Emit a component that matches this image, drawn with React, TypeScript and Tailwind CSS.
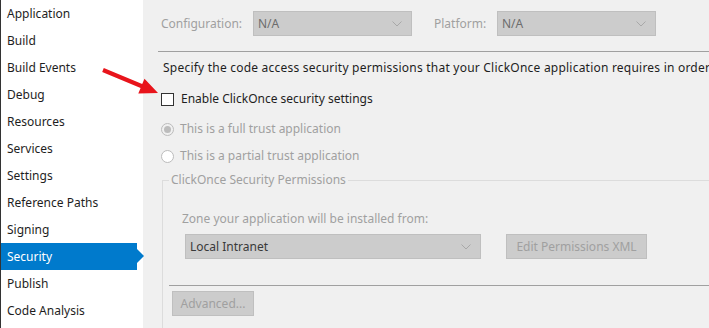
import React from "react";

const items = [
  "Application",
  "Build",
  "Build Events",
  "Debug",
  "Resources",
  "Services",
  "Settings",
  "Reference Paths",
  "Signing",
  "Security",
  "Publish",
  "Code Analysis",
];

function Chevron() {
  return (
    <svg width="10" height="6" viewBox="0 0 10 6" className="shrink-0">
      <polyline points="0.5,0.5 5,5 9.5,0.5" fill="none" stroke="#a8a8a8" strokeWidth="1" />
    </svg>
  );
}

function Select({ value, w, dark }: { value: string; w: string; dark?: boolean }) {
  return (
    <div
      className={`${w} h-[25px] bg-[#cccccc] border border-[#bfbfbf] flex items-center justify-between pl-[4px] pr-[9px] ${
        dark ? "text-[#3a3a3a]" : "text-[#6d6d6d]"
      }`}
    >
      <span>{value}</span>
      <Chevron />
    </div>
  );
}

export default function App() {
  return (
    <div
      className="relative w-[709px] h-[328px] overflow-hidden flex text-[12px] leading-[16px]"
      style={{ fontFamily: '"Noto Sans", "Open Sans", sans-serif' }}
    >
      {/* Sidebar */}
      <div className="w-[143px] h-full bg-white border-l border-[#333333] shrink-0">
        {items.map((it) => {
          const sel = it === "Security";
          return (
            <div
              key={it}
              className={`relative w-[136px] h-[27px] flex items-center pl-[6px] ${
                sel ? "bg-[#007acc] text-white" : "text-[#1e1e1e]"
              }`}
            >
              {it}
              {sel && (
                <div className="absolute right-[-7px] top-[6px] w-0 h-0 border-y-[7px] border-y-transparent border-l-[7px] border-l-[#007acc]" />
              )}
            </div>
          );
        })}
      </div>

      {/* Main */}
      <div className="flex-1 h-full bg-[#f0f0f0] pl-[15px] flex flex-col">
        <div className="flex items-center pt-[11px] pl-[3px]">
          <div className="w-[92px] text-[#a0a0a0]">Configuration:</div>
          <Select value="N/A" w="w-[159px]" />
          <div className="w-[63px] ml-[22px] text-[#a0a0a0]">Platform:</div>
          <Select value="N/A" w="w-[159px]" />
        </div>
        <div className="mt-[15px] h-px bg-[#a0a0a0]" />
        <div className="mt-[8px] ml-[5px] whitespace-nowrap text-[#1e1e1e] tracking-[0.22px]">
          Specify the code access security permissions that your ClickOnce application requires in order
        </div>
        <div className="mt-[15px] ml-[3px] flex items-center h-[16px] text-[#1e1e1e]">
          <div className="w-[13px] h-[13px] border border-[#333333] bg-white" />
          <span className="ml-[7px]">Enable ClickOnce security settings</span>
        </div>
        <div className="mt-[14px] ml-[3px] flex items-center h-[16px] text-[#a0a0a0]">
          <div className="w-[13px] h-[13px] rounded-full border border-[#bcbcbc] bg-[#f0f0f0] flex items-center justify-center">
            <div className="w-[7px] h-[7px] rounded-full bg-[#bcbcbc]" />
          </div>
          <span className="ml-[6px]">This is a full trust application</span>
        </div>
        <div className="mt-[11px] ml-[3px] flex items-center h-[16px] text-[#a0a0a0]">
          <div className="w-[13px] h-[13px] rounded-full border border-[#bcbcbc] bg-white" />
          <span className="ml-[6px]">This is a partial trust application</span>
        </div>

        <fieldset className="mt-[8px] ml-[4px] flex-1 border-t border-l border-[#dcdcdc]">
          <legend className="ml-[6px] px-[2px] text-[#a0a0a0]">ClickOnce Security Permissions</legend>
          <div className="mt-[23px] ml-[19px] text-[#a0a0a0] whitespace-nowrap">
            Zone your application will be installed from:
          </div>
          <div className="mt-[7px] ml-[22px] flex">
            <Select value="Local Intranet" w="w-[296px]" dark />
            <div className="ml-[25px] w-[141px] h-[25px] bg-[#cccccc] border border-[#bfbfbf] flex items-center justify-center text-[#a0a0a0]">
              Edit Permissions XML
            </div>
          </div>
          <div className="mt-[26px] ml-[6px] h-px bg-[#a0a0a0]" />
          <div className="mt-[5px] ml-[9px] w-[82px] h-[25px] bg-[#cccccc] border border-[#bfbfbf] flex items-center justify-center text-[#a0a0a0]">
            Advanced...
          </div>
        </fieldset>
      </div>

      {/* Red annotation arrow */}
      <svg
        className="absolute left-0 top-0 pointer-events-none"
        width="709"
        height="328"
        viewBox="0 0 709 328"
      >
        <polygon
          points="103.8,68 142.2,84.1 144.5,78.7 158,93 138.3,93.5 140.6,88.1 102.2,72"
          fill="#e8141b"
        />
      </svg>
    </div>
  );
}
